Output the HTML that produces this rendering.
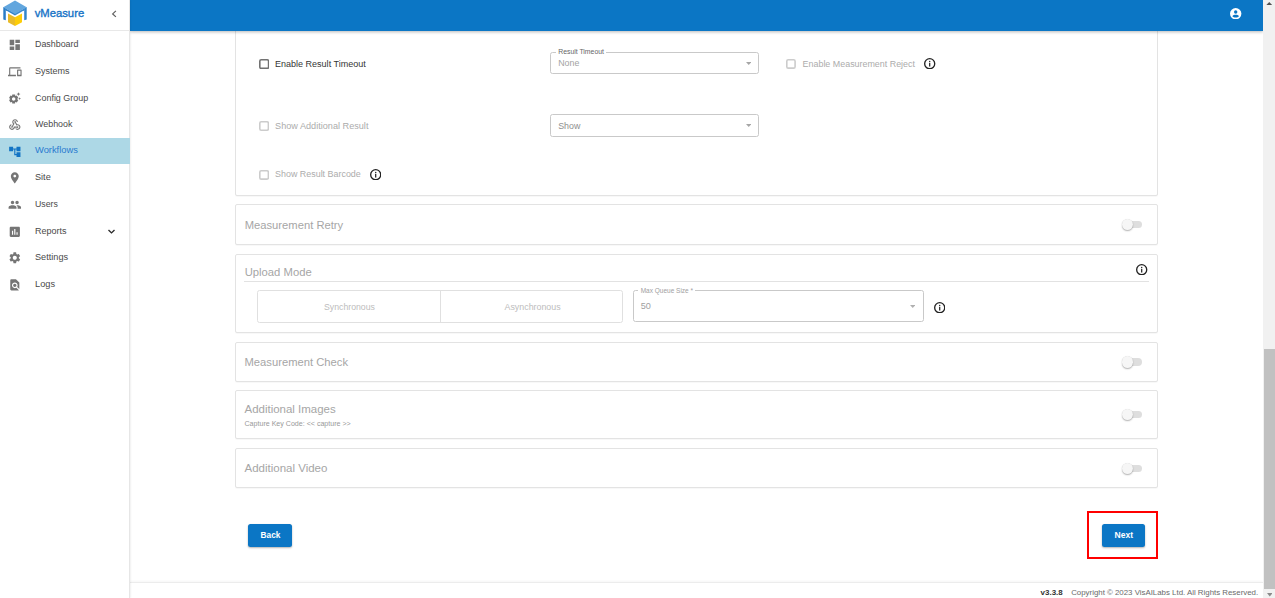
<!DOCTYPE html>
<html><head><meta charset="utf-8">
<style>
*{box-sizing:border-box;margin:0;padding:0}
html,body{width:1275px;height:598px;overflow:hidden;background:#fff;font-family:"Liberation Sans",sans-serif}
.t{position:absolute;white-space:pre}
.r{position:absolute}
.ic{position:absolute;display:block}
.cb{position:absolute;border:1.35px solid #c8c8c8;border-radius:1.5px}
</style></head><body>
<div class="r" style="left:235.00px;top:-10.00px;width:923.00px;height:206.00px;border:1px solid #e3e3e3;border-radius:2px;background:#fff;box-shadow:0 1px 1px rgba(0,0,0,.03)"></div>
<div class="r" style="left:235.00px;top:204.00px;width:923.00px;height:41.00px;border:1px solid #e3e3e3;border-radius:2px;background:#fff;box-shadow:0 1px 1px rgba(0,0,0,.03)"></div>
<div class="r" style="left:235.00px;top:254.00px;width:923.00px;height:79.00px;border:1px solid #e3e3e3;border-radius:2px;background:#fff;box-shadow:0 1px 1px rgba(0,0,0,.03)"></div>
<div class="r" style="left:235.00px;top:342.00px;width:923.00px;height:40.00px;border:1px solid #e3e3e3;border-radius:2px;background:#fff;box-shadow:0 1px 1px rgba(0,0,0,.03)"></div>
<div class="r" style="left:235.00px;top:390.00px;width:923.00px;height:49.00px;border:1px solid #e3e3e3;border-radius:2px;background:#fff;box-shadow:0 1px 1px rgba(0,0,0,.03)"></div>
<div class="r" style="left:235.00px;top:448.00px;width:923.00px;height:40.00px;border:1px solid #e3e3e3;border-radius:2px;background:#fff;box-shadow:0 1px 1px rgba(0,0,0,.03)"></div>
<svg class="ic" style="left:258.50px;top:58.70px" width="10.40" height="10.20" viewBox="0 0 10.40 10.20"><rect x="0.8" y="0.8" width="8.80" height="8.60" rx="1.4" fill="none" stroke="#727272" stroke-width="1.6"/></svg>
<div class="t" style="left:275.00px;top:59.82px;font-size:9.02px;line-height:9.02px;color:#353535;font-weight:normal;letter-spacing:0px;">Enable Result Timeout</div>
<div class="r" style="left:550.00px;top:52.00px;width:209.00px;height:22.00px;border:1px solid #c9c9c9;border-radius:2.5px"></div>
<div class="r" style="left:555.50px;top:50.00px;width:50.50px;height:5.00px;background:#fff"></div>
<div class="t" style="left:558.20px;top:48.94px;font-size:6.86px;line-height:6.86px;color:#666666;font-weight:normal;letter-spacing:0px;">Result Timeout</div>
<div class="t" style="left:558.20px;top:58.78px;font-size:8.83px;line-height:8.83px;color:#a3a3a3;font-weight:normal;letter-spacing:0px;">None</div>
<svg class="ic" style="left:745.50px;top:62.00px" width="5.5" height="3" viewBox="0 0 5.5 3"><polygon points="0,0 5.5,0 2.75,3" fill="#a6a6a6"/></svg>
<svg class="ic" style="left:785.90px;top:59.00px" width="9.90" height="9.90" viewBox="0 0 9.90 9.90"><rect x="0.8" y="0.8" width="8.30" height="8.30" rx="1.4" fill="none" stroke="#cccccc" stroke-width="1.6"/></svg>
<div class="t" style="left:802.60px;top:60.00px;font-size:8.92px;line-height:8.92px;color:#acacac;font-weight:normal;letter-spacing:0px;">Enable Measurement Reject</div>
<svg class="ic" style="left:924.30px;top:58.10px" width="11.40" height="11.40" viewBox="0 0 24 24"><circle cx="12" cy="12" r="10.6" fill="none" stroke="#222" stroke-width="2.8"/><circle cx="12" cy="7.4" r="1.5" fill="#222"/><rect x="10.7" y="10.2" width="2.6" height="7.8" fill="#222"/></svg>
<svg class="ic" style="left:258.50px;top:120.90px" width="10.20" height="10.00" viewBox="0 0 10.20 10.00"><rect x="0.8" y="0.8" width="8.60" height="8.40" rx="1.4" fill="none" stroke="#cccccc" stroke-width="1.6"/></svg>
<div class="t" style="left:275.10px;top:121.80px;font-size:9.15px;line-height:9.15px;color:#acacac;font-weight:normal;letter-spacing:0px;">Show Additional Result</div>
<div class="r" style="left:550.00px;top:114.00px;width:209.00px;height:23.00px;border:1px solid #c9c9c9;border-radius:2.5px"></div>
<div class="t" style="left:558.20px;top:121.73px;font-size:8.88px;line-height:8.88px;color:#8e8e8e;font-weight:normal;letter-spacing:0px;">Show</div>
<svg class="ic" style="left:745.50px;top:124.00px" width="5.5" height="3" viewBox="0 0 5.5 3"><polygon points="0,0 5.5,0 2.75,3" fill="#a6a6a6"/></svg>
<svg class="ic" style="left:258.50px;top:169.80px" width="10.20" height="9.90" viewBox="0 0 10.20 9.90"><rect x="0.8" y="0.8" width="8.60" height="8.30" rx="1.4" fill="none" stroke="#cccccc" stroke-width="1.6"/></svg>
<div class="t" style="left:275.10px;top:170.30px;font-size:8.92px;line-height:8.92px;color:#acacac;font-weight:normal;letter-spacing:0px;">Show Result Barcode</div>
<svg class="ic" style="left:369.60px;top:168.70px" width="11.40" height="11.40" viewBox="0 0 24 24"><circle cx="12" cy="12" r="10.6" fill="none" stroke="#222" stroke-width="2.8"/><circle cx="12" cy="7.4" r="1.5" fill="#222"/><rect x="10.7" y="10.2" width="2.6" height="7.8" fill="#222"/></svg>
<div class="t" style="left:244.70px;top:219.65px;font-size:11.22px;line-height:11.22px;color:#a6a6a6;font-weight:normal;letter-spacing:0px;">Measurement Retry</div>
<div class="r" style="left:1124.50px;top:221.05px;width:17.50px;height:7.30px;background:#dedede;border-radius:4px"></div>
<div class="r" style="left:1121.50px;top:219.05px;width:11.30px;height:11.30px;background:#f6f6f6;border-radius:50%;box-shadow:0 1px 1.5px rgba(0,0,0,.3),0 0 0.5px rgba(0,0,0,.15)"></div>
<div class="t" style="left:244.70px;top:266.50px;font-size:11.28px;line-height:11.28px;color:#a6a6a6;font-weight:normal;letter-spacing:0px;">Upload Mode</div>
<svg class="ic" style="left:1136.20px;top:264.00px" width="11.40" height="11.40" viewBox="0 0 24 24"><circle cx="12" cy="12" r="10.6" fill="none" stroke="#222" stroke-width="2.8"/><circle cx="12" cy="7.4" r="1.5" fill="#222"/><rect x="10.7" y="10.2" width="2.6" height="7.8" fill="#222"/></svg>
<div class="r" style="left:244.00px;top:281.20px;width:905.00px;height:1.00px;background:#e2e2e2"></div>
<div class="r" style="left:257.00px;top:290.00px;width:366.00px;height:33.00px;border:1px solid #e0e0e0;border-radius:2.5px"></div>
<div class="r" style="left:440.00px;top:291.00px;width:1.00px;height:31.00px;background:#e0e0e0"></div>
<div class="t" style="left:324.00px;top:303.17px;font-size:8.72px;line-height:8.72px;color:#bdbdbd;font-weight:normal;letter-spacing:0px;">Synchronous</div>
<div class="t" style="left:504.50px;top:303.04px;font-size:8.87px;line-height:8.87px;color:#bdbdbd;font-weight:normal;letter-spacing:0px;">Asynchronous</div>
<div class="r" style="left:633.00px;top:290.00px;width:291.00px;height:32.00px;border:1px solid #c9c9c9;border-radius:2.5px"></div>
<div class="r" style="left:638.00px;top:288.00px;width:57.00px;height:6.00px;background:#fff"></div>
<div class="t" style="left:640.70px;top:287.84px;font-size:6.50px;line-height:6.50px;color:#a0a0a0;font-weight:normal;letter-spacing:0px;">Max Queue Size *</div>
<div class="t" style="left:640.70px;top:302.14px;font-size:9.11px;line-height:9.11px;color:#a0a0a0;font-weight:normal;letter-spacing:0px;">50</div>
<svg class="ic" style="left:909.80px;top:305.00px" width="5.5" height="3" viewBox="0 0 5.5 3"><polygon points="0,0 5.5,0 2.75,3" fill="#b0b0b0"/></svg>
<svg class="ic" style="left:933.80px;top:301.50px" width="11.40" height="11.40" viewBox="0 0 24 24"><circle cx="12" cy="12" r="10.6" fill="none" stroke="#222" stroke-width="2.8"/><circle cx="12" cy="7.4" r="1.5" fill="#222"/><rect x="10.7" y="10.2" width="2.6" height="7.8" fill="#222"/></svg>
<div class="t" style="left:244.50px;top:356.74px;font-size:11.23px;line-height:11.23px;color:#a6a6a6;font-weight:normal;letter-spacing:0px;">Measurement Check</div>
<div class="r" style="left:1124.50px;top:358.25px;width:17.50px;height:7.30px;background:#dedede;border-radius:4px"></div>
<div class="r" style="left:1121.50px;top:356.25px;width:11.30px;height:11.30px;background:#f6f6f6;border-radius:50%;box-shadow:0 1px 1.5px rgba(0,0,0,.3),0 0 0.5px rgba(0,0,0,.15)"></div>
<div class="t" style="left:244.50px;top:404.24px;font-size:11.48px;line-height:11.48px;color:#a6a6a6;font-weight:normal;letter-spacing:0px;">Additional Images</div>
<div class="t" style="left:244.50px;top:420.96px;font-size:7.08px;line-height:7.08px;color:#999999;font-weight:normal;letter-spacing:0px;">Capture Key Code: &lt;&lt; capture &gt;&gt;</div>
<div class="r" style="left:1124.50px;top:410.95px;width:17.50px;height:7.30px;background:#dedede;border-radius:4px"></div>
<div class="r" style="left:1121.50px;top:408.95px;width:11.30px;height:11.30px;background:#f6f6f6;border-radius:50%;box-shadow:0 1px 1.5px rgba(0,0,0,.3),0 0 0.5px rgba(0,0,0,.15)"></div>
<div class="t" style="left:244.50px;top:462.91px;font-size:11.50px;line-height:11.50px;color:#a6a6a6;font-weight:normal;letter-spacing:0px;">Additional Video</div>
<div class="r" style="left:1124.50px;top:464.55px;width:17.50px;height:7.30px;background:#dedede;border-radius:4px"></div>
<div class="r" style="left:1121.50px;top:462.55px;width:11.30px;height:11.30px;background:#f6f6f6;border-radius:50%;box-shadow:0 1px 1.5px rgba(0,0,0,.3),0 0 0.5px rgba(0,0,0,.15)"></div>
<div class="r" style="left:248.40px;top:524.00px;width:43.60px;height:22.70px;background:#0b76c5;border-radius:2.5px;box-shadow:0 1px 2px rgba(0,0,0,.3)"></div>
<div class="t" style="left:260.60px;top:531.95px;font-size:8.27px;line-height:8.27px;color:#fff;font-weight:bold;letter-spacing:0px;">Back</div>
<div class="r" style="left:1102.10px;top:523.70px;width:42.60px;height:23.30px;background:#0b76c5;border-radius:2.5px;box-shadow:0 1px 2px rgba(0,0,0,.3)"></div>
<div class="t" style="left:1114.60px;top:531.33px;font-size:8.53px;line-height:8.53px;color:#fff;font-weight:bold;letter-spacing:0px;">Next</div>
<div class="r" style="left:1087.00px;top:511.00px;width:71.00px;height:48.00px;border:2px solid #f00"></div>
<div class="r" style="left:130.00px;top:581.80px;width:1133.00px;height:16.20px;background:#fff;border-top:1px solid #ececec;box-shadow:0 -1px 2px rgba(0,0,0,.04)"></div>
<div class="t" style="left:1040.60px;top:589.31px;font-size:7.96px;line-height:7.96px;color:#333;font-weight:bold;letter-spacing:0px;">v3.3.8</div>
<div class="t" style="left:1071.20px;top:589.39px;font-size:7.87px;line-height:7.87px;color:#6a6a6a;font-weight:normal;letter-spacing:0px;">Copyright © 2023 VisAILabs Ltd. All Rights Reserved.</div>
<div class="r" style="left:130.00px;top:0.00px;width:1133.00px;height:30.60px;background:#0b76c5;box-shadow:0 1px 3px rgba(0,0,0,.28)"></div>
<svg class="ic" style="left:1230.2px;top:7.8px" width="11.4" height="11.4" viewBox="0 0 24 24"><circle cx="12" cy="12" r="12" fill="#fff"/><circle cx="12" cy="8.6" r="3.6" fill="#0b76c5"/><path d="M5 17.2c1.2-2 4.2-3 7-3s5.8 1 7 3c-1.5 1.8-4 3-7 3s-5.5-1.2-7-3z" fill="#0b76c5"/></svg>
<div class="r" style="left:0.00px;top:0.00px;width:130.00px;height:598.00px;background:#fff;border-right:1px solid #e6e6e6;box-shadow:1px 0 1.5px rgba(0,0,0,.06)"></div>
<div class="r" style="left:0.00px;top:30.00px;width:129.00px;height:1.00px;background:#e8e8e8"></div>
<svg class="ic" style="left:0;top:0" width="30" height="28" viewBox="0 0 30 28">
<polygon points="3.3,7.2 5.8,8.6 5.8,20.3 3.3,19.6" fill="#2a7cc6"/>
<polygon points="26.7,7.2 24.2,8.6 24.2,20.3 26.7,19.6" fill="#3385cc"/>
<polygon points="3.0,7.0 15,13.2 15,15.4 5.8,10.2" fill="#2f80c8"/>
<polygon points="27.0,7.0 15,13.2 15,15.4 24.2,10.2" fill="#3a8acf"/>
<polygon points="3.3,7.2 15,0.4 26.7,7.2 15,13.9" fill="#62a6de"/>
<polygon points="8,13.6 15,17.3 15,26 8,22.2" fill="#e9bb2a"/>
<polygon points="15,17.3 22,13.6 22,22.2 15,26" fill="#fdcd08"/>
</svg>
<div class="t" style="left:34.70px;top:7.71px;font-size:11.27px;line-height:11.27px;color:#1572c6;font-weight:normal;letter-spacing:0px;-webkit-text-stroke:0.35px #1572c6;">vMeasure</div>
<svg class="ic" style="left:111px;top:9.5px" width="7" height="8" viewBox="0 0 7 8"><polyline points="4.9,0.9 1.7,3.9 4.9,6.9" fill="none" stroke="#606060" stroke-width="1.25"/></svg>
<svg class="ic" style="left:8.20px;top:38.03px" width="13.60" height="13.60" viewBox="0 0 24 24" fill="#757575"><path d="M3 13h8V3H3v10zm0 8h8v-6H3v6zm10 0h8V11h-8v10zm0-18v6h8V3h-8z"/></svg>
<div class="t" style="left:35.00px;top:40.42px;font-size:8.89px;line-height:8.89px;color:#4a4a4a;font-weight:normal;letter-spacing:0px;">Dashboard</div>
<svg class="ic" style="left:8.20px;top:64.70px" width="13.60" height="13.60" viewBox="0 0 24 24" fill="#757575"><path d="M4 6h18V4H4c-1.1 0-2 .9-2 2v11H0v3h14v-3H4V6zm19 2h-6c-.55 0-1 .45-1 1v10c0 .55.45 1 1 1h6c.55 0 1-.45 1-1V9c0-.55-.45-1-1-1zm-1 9h-4v-7h4v7z"/></svg>
<div class="t" style="left:35.00px;top:66.71px;font-size:9.03px;line-height:9.03px;color:#4a4a4a;font-weight:normal;letter-spacing:0px;">Systems</div>
<svg class="ic" style="left:8.20px;top:91.36px" width="13.60" height="13.60" viewBox="0 0 24 24" fill="#757575"><path d="M17.41 6.59 15 5.5l2.41-1.09L18.5 2l1.09 2.41L22 5.5l-2.41 1.09L18.5 9l-1.09-2.41zm3.87 6.13L20.5 11l-.78 1.72-1.72.78 1.72.78.78 1.72.78-1.72L23 13.5l-1.72-.78zm-5.04 1.65 1.94 1.47-2.5 4.33-2.240-.94c-.2.13-.42.26-.64.37l-.3 2.4h-5l-.3-2.41c-.22-.11-.43-.23-.64-.37l-2.24.94-2.5-4.33 1.94-1.47c-.01-.12-.01-.25-.01-.37s0-.25.01-.37l-1.94-1.47 2.5-4.33 2.24.94c.2-.13.42-.26.64-.37L7.5 6h5l.3 2.41c.22.11.43.23.64.37l2.24-.94 2.5 4.330-1.94 1.47c.01.12.01.24.01.37s0 .24-.01.36zM13 14c0-1.66-1.34-3-3-3s-3 1.34-3 3 1.34 3 3 3 3-1.34 3-3z"/></svg>
<div class="t" style="left:35.00px;top:93.68px;font-size:8.95px;line-height:8.95px;color:#4a4a4a;font-weight:normal;letter-spacing:0px;">Config Group</div>
<svg class="ic" style="left:8.20px;top:118.03px" width="13.60" height="13.60" viewBox="0 0 24 24" fill="#757575"><path d="M10 15h5.88c.27-.31.67-.5 1.12-.5.83 0 1.5.67 1.5 1.5s-.67 1.5-1.5 1.5c-.44 0-.84-.19-1.12-.5H11.9c-.46 2.28-2.48 4-4.9 4-2.76 0-5-2.240-5-5 0-2.42 1.72-4.44 4-4.9v2.07c-1.16.41-2 1.53-2 2.83 0 1.65 1.35 3 3 3s3-1.35 3-3v-1zm2.5-11c1.65 0 3 1.35 3 3h2c0-2.760-2.24-5-5-5s-5 2.24-5 5c0 1.43.6 2.71 1.55 3.62l-2.35 3.9C6.02 14.66 5.5 15.27 5.5 16c0 .83.67 1.5 1.5 1.5s1.5-.67 1.5-1.5c0-.16-.02-.31-.07-.45l3.38-5.63C10.49 9.61 9.5 8.42 9.5 7c0-1.65 1.35-3 3-3zm4.5 9c-.64 0-1.23.2-1.72.54l-3.05-5.07C11.530 8.35 11 7.74 11 7c0-.83.67-1.5 1.5-1.5S14 6.17 14 7c0 .15-.02.29-.06.43l2.19 3.65c.28-.05.57-.08.87-.08 2.76 0 5 2.24 5 5s-2.24 5-5 5c-1.85 0-3.47-1.01-4.33-2.5h2.67c.48.32 1.05.5 1.66.5 1.65 0 3-1.35 3-3s-1.350-3-3-3z"/></svg>
<div class="t" style="left:35.00px;top:119.70px;font-size:8.92px;line-height:8.92px;color:#4a4a4a;font-weight:normal;letter-spacing:0px;">Webhook</div>
<div class="r" style="left:0.00px;top:138.07px;width:129.80px;height:26.30px;background:#add8e6"></div>
<svg class="ic" style="left:8.20px;top:144.70px" width="13.60" height="13.60" viewBox="0 0 24 24" fill="#1273c4"><path d="M22 11V3h-7v3H9V3H2v8h7V8h2v10h4v3h7v-8h-7v3h-2V8h2v3z"/></svg>
<div class="t" style="left:35.00px;top:146.35px;font-size:9.33px;line-height:9.33px;color:#2a7ad0;font-weight:normal;letter-spacing:0px;">Workflows</div>
<svg class="ic" style="left:8.20px;top:171.37px" width="13.60" height="13.60" viewBox="0 0 24 24" fill="#757575"><path d="M12 2C8.13 2 5 5.13 5 9c0 5.25 7 13 7 13s7-7.75 7-13c0-3.87-3.13-7-7-7zm0 9.5c-1.38 0-2.5-1.12-2.5-2.5s1.12-2.5 2.5-2.5 2.5 1.12 2.5 2.5-1.12 2.5-2.5 2.5z"/></svg>
<div class="t" style="left:35.00px;top:173.42px;font-size:9.13px;line-height:9.13px;color:#4a4a4a;font-weight:normal;letter-spacing:0px;">Site</div>
<svg class="ic" style="left:8.20px;top:198.03px" width="13.60" height="13.60" viewBox="0 0 24 24" fill="#757575"><path d="M16 11c1.66 0 2.99-1.34 2.99-3S17.66 5 16 5c-1.66 0-3 1.34-3 3s1.34 3 3 3zm-8 0c1.66 0 2.99-1.34 2.99-3S9.66 5 8 5C6.34 5 5 6.34 5 8s1.34 3 3 3zm0 2c-2.33 0-7 1.17-7 3.5V19h14v-2.5c0-2.33-4.67-3.5-7-3.5zm8 0c-.29 0-.62.02-.97.05 1.16.84 1.97 1.97 1.97 3.45V19h6v-2.5c0-2.33-4.67-3.5-7-3.5z"/></svg>
<div class="t" style="left:35.00px;top:200.23px;font-size:8.77px;line-height:8.77px;color:#4a4a4a;font-weight:normal;letter-spacing:0px;">Users</div>
<svg class="ic" style="left:8.20px;top:224.70px" width="13.60" height="13.60" viewBox="0 0 24 24" fill="#757575"><path d="M19 3H5c-1.1 0-2 .9-2 2v14c0 1.1.9 2 2 2h14c1.1 0 2-.9 2-2V5c0-1.1-.9-2-2-2zM9 17H7v-7h2v7zm4 0h-2V7h2v10zm4 0h-2v-4h2v4z"/></svg>
<div class="t" style="left:35.00px;top:226.71px;font-size:9.03px;line-height:9.03px;color:#4a4a4a;font-weight:normal;letter-spacing:0px;">Reports</div>
<svg class="ic" style="left:8.20px;top:251.37px" width="13.60" height="13.60" viewBox="0 0 24 24" fill="#757575"><path d="M19.14 12.94c.04-.3.06-.61.06-.94 0-.32-.02-.64-.07-.94l2.03-1.58c.18-.14.23-.41.12-.61l-1.92-3.32c-.12-.22-.37-.29-.59-.22l-2.39.96c-.5-.38-1.03-.7-1.62-.94l-.36-2.54c-.04-.24-.24-.41-.48-.41h-3.84c-.24 0-.43.17-.47.41l-.36 2.54c-.59.24-1.13.57-1.62.94l-2.39-.96c-.22-.08-.47 0-.59.22L2.74 8.87c-.12.21-.08.47.12.61l2.03 1.58c-.05.3-.09.63-.09.94s.02.64.07.94l-2.03 1.58c-.18.14-.23.41-.12.61l1.92 3.32c.12.22.37.29.59.22l2.39-.96c.5.38 1.03.7 1.62.94l.36 2.54c.05.24.24.41.48.41h3.84c.24 0 .44-.17.47-.41l.36-2.54c.59-.24 1.13-.56 1.62-.94l2.39.96c.22.08.47 0 .59-.22l1.920-3.32c.12-.22.07-.47-.12-.61l-2.01-1.58zM12 15.6c-1.98 0-3.6-1.62-3.6-3.6s1.62-3.6 3.6-3.6 3.6 1.62 3.6 3.6-1.62 3.6-3.6 3.6z"/></svg>
<div class="t" style="left:35.00px;top:253.29px;font-size:9.17px;line-height:9.17px;color:#4a4a4a;font-weight:normal;letter-spacing:0px;">Settings</div>
<svg class="ic" style="left:8.20px;top:278.03px" width="13.60" height="13.60" viewBox="0 0 24 24" fill="#757575"><path d="M20 19.59V8l-6-6H6c-1.1 0-1.99.9-1.99 2L4 20c0 1.1.89 2 1.99 2H18c.45 0 .85-.15 1.19-.4l-4.43-4.43c-.8.52-1.74.83-2.76.83-2.76 0-5-2.24-5-5s2.24-5 5-5 5 2.24 5 5c0 1.02-.31 1.96-.83 2.75L20 19.59zM9 13c0 1.66 1.34 3 3 3s3-1.34 3-3-1.34-3-3-3-3 1.34-3 3z"/></svg>
<div class="t" style="left:35.00px;top:279.93px;font-size:9.24px;line-height:9.24px;color:#4a4a4a;font-weight:normal;letter-spacing:0px;">Logs</div>
<svg class="ic" style="left:107px;top:227.5px" width="9" height="7" viewBox="0 0 9 7"><polyline points="1.5,1.9 4.5,4.9 7.5,1.9" fill="none" stroke="#2a2a2a" stroke-width="1.35"/></svg>
<div class="r" style="left:1263.00px;top:0.00px;width:12.00px;height:598.00px;background:#f1f1f1"></div>
<div class="r" style="left:1264.00px;top:349.00px;width:11.00px;height:240.00px;background:#c1c1c1"></div>
<svg class="ic" style="left:1266.4px;top:1.5px" width="6.5" height="3.4" viewBox="0 0 6.5 3.4"><polygon points="0,3.4 6.5,3.4 3.25,0" fill="#505050"/></svg>
<svg class="ic" style="left:1266.9px;top:593.3px" width="5.6" height="3.4" viewBox="0 0 5.6 3.4"><polygon points="0,0 5.6,0 2.8,3.4" fill="#8a8a8a"/></svg>
</body></html>
